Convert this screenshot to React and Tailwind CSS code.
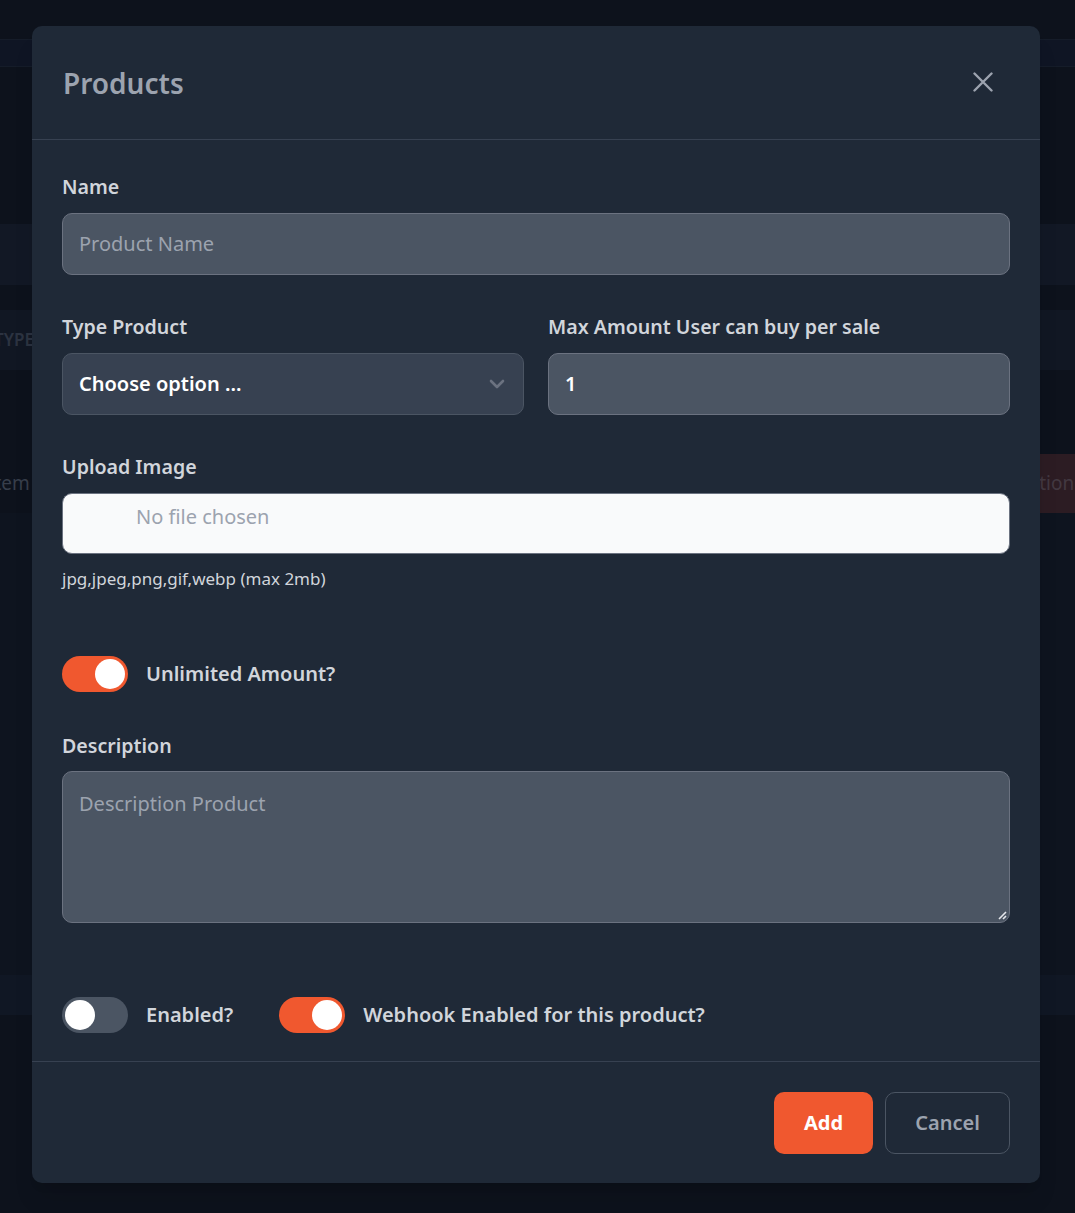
function Toggle({ on }) {
  return (
    <span className={`flex h-[36px] w-[66px] shrink-0 items-center rounded-full p-[3px] ${on ? 'justify-end bg-[#f0582f]' : 'justify-start bg-[#4b5563]'}`}>
      <span className="block h-[30px] w-[30px] rounded-full bg-white" />
    </span>
  )
}

function Label({ children }) {
  return <div className="mb-[13px] text-[19.6px] leading-[26px] font-semibold text-[#d1d5db]">{children}</div>
}

function Backdrop() {
  return (
    <div className="flex min-h-[1213px] flex-col bg-[#0f131d]">
      <div className="h-[39px]" />
      <div className="h-[28px] border-y border-[#1b2230] bg-[#121829]" />
      <div className="h-[157px]" />
      <div className="h-[61px] bg-[#161c2a]" />
      <div className="h-[25px]" />
      <div className="flex h-[60px] items-center bg-[#151a28]">
        <span className="-ml-[6px] text-[17px] font-semibold text-[#3b4352]">TYPE</span>
      </div>
      <div className="h-[84px]" />
      <div className="flex h-[59px] items-center justify-between overflow-hidden">
        <span className="-ml-[12px] text-[19px] text-[#4b5260]">Item</span>
        <span className="flex h-[59px] w-[65px] shrink-0 items-center whitespace-nowrap bg-[#3b2228] pl-[8px] text-[19px] text-[#5b4a52]">Action</span>
      </div>
      <div className="h-[462px] bg-[#111622]" />
      <div className="h-[40px] bg-[#131a29]" />
    </div>
  )
}

export default function App() {
  return (
    <div className="relative overflow-hidden font-['Noto_Sans',sans-serif]">
      <Backdrop />
      <div className="absolute inset-0 bg-[#0b0f19]/30" />
      <div className="absolute left-[32px] top-[26px] w-[1008px] rounded-[10px] bg-[#1f2937] shadow-xl">
        <div className="flex h-[114px] items-center justify-between border-b border-[#374151] pl-[31px] pr-[47px]">
          <h1 className="text-[28px] font-semibold text-[#9ca3af]">Products</h1>
          <svg width="20" height="20" viewBox="0 0 20 20" className="mt-[-2px]">
            <path d="M1.5 1.5 L18.5 18.5 M18.5 1.5 L1.5 18.5" stroke="#9ca3af" strokeWidth="2.4" strokeLinecap="round" />
          </svg>
        </div>
        <div className="px-[30px] pt-[34px] pb-[28px]">
          <Label>Name</Label>
          <div className="flex h-[62px] items-center rounded-[10px] border border-[#6b7280] bg-[#4b5563] px-[16px] text-[20px] text-[#9ca3af]">Product Name</div>

          <div className="mt-[39px] grid grid-cols-2 gap-[24px]">
            <div>
              <Label>Type Product</Label>
              <div className="flex h-[62px] items-center justify-between rounded-[10px] border border-[#4b5563] bg-[#374151] pl-[16px] pr-[18px] text-[20px] font-semibold text-white">
                <span>Choose option ...</span>
                <svg width="16" height="10" viewBox="0 0 16 10">
                  <path d="M2 2 L8 8 L14 2" fill="none" stroke="#6b7280" strokeWidth="2.6" strokeLinecap="round" strokeLinejoin="round" />
                </svg>
              </div>
            </div>
            <div>
              <Label>Max Amount User can buy per sale</Label>
              <div className="flex h-[62px] items-center rounded-[10px] border border-[#6b7280] bg-[#4b5563] px-[16px] text-[20px] font-semibold text-white">1</div>
            </div>
          </div>

          <div className="mt-[39px]">
            <Label>Upload Image</Label>
            <div className="h-[61px] rounded-[10px] border border-[#6b7280] bg-[#f9fafb] pl-[73px] pt-[8px] text-[20px] text-[#9ca3af]">No file chosen</div>
            <div className="mt-[12px] text-[17px] text-[#d1d5db]">jpg,jpeg,png,gif,webp (max 2mb)</div>
          </div>

          <div className="mt-[64px] flex items-center gap-[18px]">
            <Toggle on />
            <span className="text-[20px] font-semibold text-[#d1d5db]">Unlimited Amount?</span>
          </div>

          <div className="mt-[41px]">
            <div className="mb-[12px] text-[19.6px] leading-[26px] font-semibold text-[#d1d5db]">Description</div>
            <div className="relative h-[152px] rounded-[10px] border border-[#6b7280] bg-[#4b5563] px-[16px] pt-[17px] text-[20px] text-[#9ca3af]">
              Description Product
              <svg className="absolute bottom-[2px] right-[2px]" width="10" height="10" viewBox="0 0 10 10">
                <path d="M9 2 L2 9 M9 6 L6 9" stroke="#e5e7eb" strokeWidth="1.6" />
              </svg>
            </div>
          </div>

          <div className="mt-[74px] flex items-center">
            <Toggle />
            <span className="ml-[18px] text-[20px] font-semibold text-[#d1d5db]">Enabled?</span>
            <span className="ml-[46px]"><Toggle on /></span>
            <span className="ml-[18px] text-[20px] font-semibold text-[#d1d5db]">Webhook Enabled for this product?</span>
          </div>
        </div>
        <div className="flex justify-end gap-[12px] border-t border-[#374151] px-[30px] pt-[30px] pb-[29px]">
          <button className="h-[62px] w-[99px] rounded-[10px] bg-[#f0582f] text-[20px] font-bold text-white">Add</button>
          <button className="h-[62px] w-[125px] rounded-[10px] border border-[#4b5563] text-[20px] font-semibold text-[#9ca3af]">Cancel</button>
        </div>
      </div>
    </div>
  )
}
